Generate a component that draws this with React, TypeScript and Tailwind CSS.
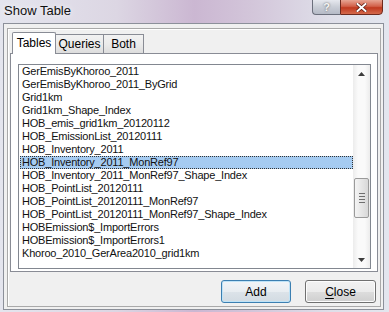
const tables = [
  "GerEmisByKhoroo_2011",
  "GerEmisByKhoroo_2011_ByGrid",
  "Grid1km",
  "Grid1km_Shape_Index",
  "HOB_emis_grid1km_20120112",
  "HOB_EmissionList_20120111",
  "HOB_Inventory_2011",
  "HOB_Inventory_2011_MonRef97",
  "HOB_Inventory_2011_MonRef97_Shape_Index",
  "HOB_PointList_20120111",
  "HOB_PointList_20120111_MonRef97",
  "HOB_PointList_20120111_MonRef97_Shape_Index",
  "HOBEmission$_ImportErrors",
  "HOBEmission$_ImportErrors1",
  "Khoroo_2010_GerArea2010_grid1km",
];

const selected = "HOB_Inventory_2011_MonRef97";

function Arrow({ up }: { up?: boolean }) {
  return (
    <svg width="7" height="4" viewBox="0 0 7 4">
      <path d={up ? "M0 4 L3.5 0 L7 4 Z" : "M0 0 L3.5 4 L7 0 Z"} fill="#3c3c3c" />
    </svg>
  );
}

function ScrollBar() {
  return (
    <div className="w-[17px] flex flex-col bg-[linear-gradient(90deg,#ececec,#fafafa_30%,#fafafa_70%,#ececec)]">
      <div className="h-[17px] flex items-center justify-center">
        <Arrow up />
      </div>
      <div className="flex-1 flex flex-col">
        <div className="h-[96px]" />
        <div className="mx-[1px] h-[40px] rounded-[2px] border border-[#9a9a9a] bg-[linear-gradient(90deg,#f4f4f4,#e6e6e6_50%,#d8d8d8)] flex flex-col items-center justify-center gap-[2px]">
          {[0, 1, 2, 3].map((i) => (
            <div key={i} className="w-[6px] h-[1px] bg-[#6f6f6f]" />
          ))}
        </div>
      </div>
      <div className="h-[17px] flex items-center justify-center">
        <Arrow />
      </div>
    </div>
  );
}

export default function App() {
  return (
    <div className="w-[389px] h-[312px] flex flex-col overflow-hidden text-black font-['Liberation_Sans',Arial,sans-serif] bg-[linear-gradient(90deg,#e4e5ee_0%,#dcd6e3_30%,#cbb7d2_50%,#d3c6da_65%,#dfdfe9_85%,#e3e6ee_100%)]">
      {/* title bar */}
      <div className="h-[23px] shrink-0 flex items-start justify-between">
        <span className="pl-[4px] pt-[3px] text-[13px] leading-[16px] text-[#111] [text-shadow:0_0_6px_#ffffff]">Show Table</span>
        <div className="flex mr-[6px] -mt-[1px]">
          <div className="w-[28px] h-[16px] rounded-bl-[4px] border border-[#6b6f7c] border-r-0 bg-[linear-gradient(180deg,#e6e8ee,#c9cdd6_50%,#b5bac6)] flex items-center justify-center text-[11px] font-bold text-[#f4f4f4] [text-shadow:0_0_2px_#555]">
            ?
          </div>
          <div className="w-[43px] h-[16px] rounded-br-[4px] border border-[#6e2a1e] bg-[linear-gradient(180deg,#e7a593,#d2614a_45%,#c0391f_55%,#d46a4c)] flex items-center justify-center">
            <svg width="11" height="9" viewBox="0 0 11 9">
              <path d="M1.5 1 L9.5 8 M9.5 1 L1.5 8" stroke="#5a1a10" strokeWidth="3.4" strokeLinecap="square" />
              <path d="M1.5 1 L9.5 8 M9.5 1 L1.5 8" stroke="#ffffff" strokeWidth="2" strokeLinecap="square" />
            </svg>
          </div>
        </div>
      </div>

      {/* client area */}
      <div className="ml-[3px] mr-[5px] mb-[2px] flex-1 border border-[#8c909a] bg-[#f0f0f0] pl-[3px] pr-[2px] pt-[4px] pb-[2px] flex flex-col">
        <div className="flex-1 border border-[#a9a9a9] shadow-[inset_1px_1px_0_#ffffff] px-[2px] pt-[2px] flex flex-col">
          {/* tabs */}
          <div className="flex items-end pl-[2px] h-[22px] text-[12px] leading-[14px]">
            <div className="relative z-10 w-[44px] h-[22px] border border-b-0 border-[#898c95] bg-white rounded-t-[2px] flex items-center justify-center pb-[2px] -mb-[1px] mr-[-1px]">
              Tables
            </div>
            <div className="w-[49px] h-[19px] border border-b-0 border-[#898c95] bg-[linear-gradient(180deg,#f2f2f2,#ebebeb_50%,#dddddd)] flex items-center justify-center">
              Queries
            </div>
            <div className="w-[40px] h-[19px] border border-b-0 border-l-0 border-[#898c95] bg-[linear-gradient(180deg,#f2f2f2,#ebebeb_50%,#dddddd)] flex items-center justify-center">
              Both
            </div>
          </div>

          {/* tab panel */}
          <div className="h-[219px] border border-[#898c95] bg-white pl-[7px] pr-[6px] pt-[10px] pb-[2px] flex flex-col">
            <div className="flex-1 border border-[#828790] flex">
              <div className="flex-1 pl-[1px] text-[11px] leading-[13px] tracking-[-0.2px] text-[#111]">
                {tables.map((t) => (
                  <div
                    key={t}
                    className={
                      t === selected
                        ? "h-[13px] pl-[1px] bg-[#a5cbf1] border border-dotted border-[#333] leading-[11px] whitespace-nowrap"
                        : "h-[13px] pl-[2px] whitespace-nowrap"
                    }
                  >
                    {t}
                  </div>
                ))}
              </div>
              <ScrollBar />
            </div>
          </div>

          {/* buttons */}
          <div className="flex justify-end gap-[14px] mt-[8px] pr-[2px] text-[12px]">
            <button className="w-[70px] h-[23px] rounded-[3px] border border-[#3c7fb1] bg-[linear-gradient(180deg,#f2f5f8,#e8edf1_50%,#dce3e9_51%,#d2dbe2)] shadow-[inset_0_0_0_1px_#bfe3f7] flex items-center justify-center">
              Add
            </button>
            <button className="w-[71px] h-[23px] rounded-[3px] border border-[#707070] bg-[linear-gradient(180deg,#f2f2f2,#ebebeb_50%,#dddddd_51%,#cfcfcf)] shadow-[inset_0_0_0_1px_#fcfcfc] flex items-center justify-center">
              <span>
                <span className="underline underline-offset-2">C</span>lose
              </span>
            </button>
          </div>
        </div>
      </div>
    </div>
  );
}
